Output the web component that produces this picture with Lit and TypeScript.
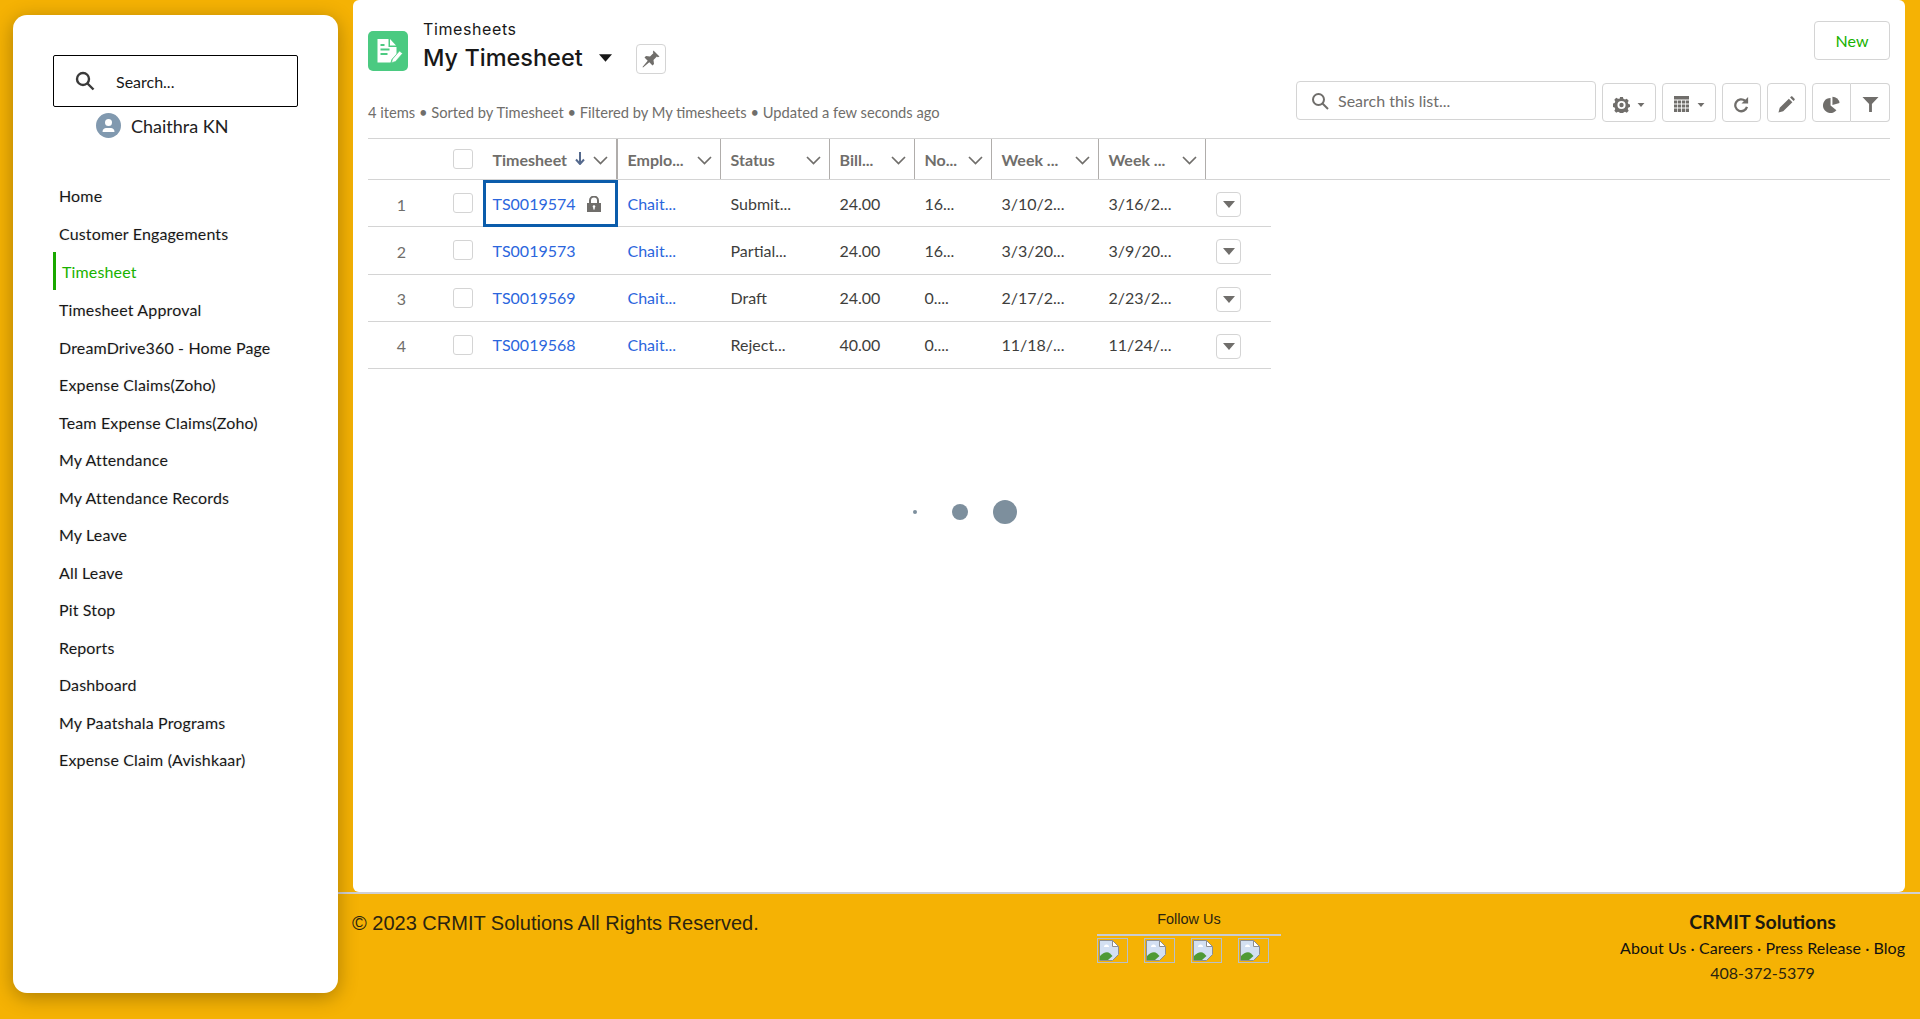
import { LitElement, css, html, svg } from 'lit'
import { customElement } from 'lit/decorators.js'

const NAV = [
  'Home', 'Customer Engagements', 'Timesheet', 'Timesheet Approval', 'DreamDrive360 - Home Page',
  'Expense Claims(Zoho)', 'Team Expense Claims(Zoho)', 'My Attendance', 'My Attendance Records',
  'My Leave', 'All Leave', 'Pit Stop', 'Reports', 'Dashboard', 'My Paatshala Programs', 'Expense Claim (Avishkaar)',
]

const COLS = [
  { label: 'Timesheet', w: 135, sorted: true },
  { label: 'Emplo...', w: 103 },
  { label: 'Status', w: 109 },
  { label: 'Bill...', w: 85 },
  { label: 'No...', w: 77 },
  { label: 'Week ...', w: 107 },
  { label: 'Week ...', w: 107 },
]

const ROWS = [
  ['TS0019574', 'Chait...', 'Submit...', '24.00', '16...', '3/10/2...', '3/16/2...'],
  ['TS0019573', 'Chait...', 'Partial...', '24.00', '16...', '3/3/20...', '3/9/20...'],
  ['TS0019569', 'Chait...', 'Draft', '24.00', '0....', '2/17/2...', '2/23/2...'],
  ['TS0019568', 'Chait...', 'Reject...', '40.00', '0....', '11/18/...', '11/24/...'],
]

const chevron = svg`<svg class="chev" viewBox="0 0 15 9"><path d="M1 1l6.500 6.500L14 1" fill="none" stroke="#706e6b" stroke-width="1.700"/></svg>`

const caret = (cls: string) => html`<svg class=${cls} viewBox="0 0 12 7"><path d="M0 0h12L6 7z" fill="currentColor"/></svg>`

// browser's missing image glyph, the links in the footer had no picture
const brokenImg = html`<span class="broken"><svg width="20" height="21" viewBox="0 0 20 21">
  <path d="M.5.500h13l6 6v8l-6 6H.5z" fill="#d3e0f2" stroke="#8e8e8e"/>
  <path d="M13.500.500v6h6z" fill="#fff" stroke="#8e8e8e"/>
  <path d="M5 7a2.500 2.500 0 0 1 5 0z" fill="#fff"/>
  <path d="M1 20v-4c3-3 7-5 10-2.500l2.500 2.500-4.500 4z" fill="#4f9a35"/>
</svg></span>`

@customElement('app-root')
export class AppRoot extends LitElement {
  static styles = css`
    :host {
      display: grid;
      grid-template-columns: 338px 1fr;
      grid-template-rows: 892px 127px;
      height: 1019px;
      background: #f5b204;
      font-family: Lato, sans-serif;
      color: #181818;
      overflow: hidden;
    }
    .side {
      grid-row: 1 / 3;
      z-index: 1;
      margin: 15px 0 26px 13px;
      background: #fff;
      border-radius: 14px;
      box-shadow: 0 4px 20px rgba(0,0,0,.3);
      padding: 40px 40px 0;
      display: flex;
      flex-direction: column;
    }
    .side-search {
      height: 52px;
      width: 245px;
      box-sizing: border-box;
      border: 1.5px solid #000;
      border-radius: 2px;
      display: flex;
      align-items: center;
      padding-left: 21px;
      gap: 21px;
      font-size: 16px;
      flex: none;
    }
    .side-search svg { width: 20px; height: 20px; }
    .user {
      display: flex;
      align-items: center;
      gap: 10px;
      margin: 6px 0 0 43px;
      font-size: 18px;
      color: #222;
    }
    .avatar { width: 25px; height: 25px; }
    .nav {
      list-style: none;
      margin: 39px 0 0;
      padding: 0;
      display: flex;
      flex-direction: column;
      font-size: 16px;
      letter-spacing: .15px;
    }
    .nav li {
      height: 37.5px;
      display: flex;
      align-items: center;
      padding-left: 6px;
      text-shadow: 0 0 2px rgba(0,0,0,.12);
    }
    .nav li.on {
      color: #19b200;
      border-left: 3px solid #19a800;
      padding-left: 6px;
      height: 38px;
      margin: 0 0 1px;
      text-shadow: none;
    }

    .main {
      z-index: 2;
      margin: 0 15px;
      background: #fff;
      border-radius: 6px;
      padding: 0 15px 0 15px;
      display: flex;
      flex-direction: column;
    }
    .top {
      display: flex;
      justify-content: space-between;
      padding-top: 21px;
      height: 60px;
      box-sizing: border-box;
    }
    .title { display: flex; }
    .app-icon { width: 40px; height: 40px; margin-top: 10px; flex: none; }
    .crumb-wrap { margin-left: 15px; font-family: Inter, sans-serif; }
    .crumb { font-size: 16px; letter-spacing: .6px; line-height: 17px; color: #181818; }
    .name-row { display: flex; align-items: center; margin-top: 4px; }
    .name { font-size: 23.5px; font-weight: 500; line-height: 30px; color: #181818; }
    .drop { width: 13px; height: 8px; margin-left: 16px; color: #181818; }
    .pin {
      width: 30px;
      height: 30px;
      margin-left: 24px;
      align-self: flex-start;
      margin-top: 2px;
    }
    .btn {
      box-sizing: border-box;
      border: 1px solid #d4d4d4;
      border-radius: 4px;
      background: #fff;
      display: flex;
      align-items: center;
      justify-content: center;
    }
    .new {
      width: 76px;
      height: 39px;
      color: #19b200;
      font-size: 16px;
    }
    .bar {
      display: flex;
      align-items: flex-end;
      justify-content: space-between;
      height: 62px;
      flex: none;
    }
    .meta { font-size: 14.7px; color: #706e6b; line-height: 17px; padding-bottom: 1px; }
    .tools { display: flex; align-items: flex-start; gap: 6px; }
    .list-search {
      width: 300px;
      height: 39px;
      box-sizing: border-box;
      border: 1px solid #d4d4d4;
      border-radius: 4px;
      display: flex;
      align-items: center;
      padding-left: 14px;
      gap: 9px;
      color: #706e6b;
      font-size: 16px;
    }
    .list-search svg { width: 18px; height: 18px; }
    .tool { height: 39px; margin-top: 2px; gap: 7px; color: #706e6b; padding-top: 4px; }
    .tool svg.ic { width: 17px; height: 17px; }
    .tool .tiny { width: 8px; height: 4px; }
    .w54 { width: 54px; }
    .w39 { width: 39px; }
    .group { display: flex; margin-top: 2px; height: 39px; }
    .group .tool { margin-top: 0; width: 39px; }
    .group .tool:first-child { border-radius: 4px 0 0 4px; }
    .group .tool:last-child { border-radius: 0 4px 4px 0; border-left: 0; }

    .head, .row { display: flex; flex: none; }
    .head {
      border-top: 1px solid #d4d4d4;
      border-bottom: 1px solid #d4d4d4;
      height: 42px;
      box-sizing: border-box;
      margin-top: 16px;
    }
    .row {
      width: 903px;
      height: 47.25px;
      box-sizing: border-box;
      border-bottom: 1px solid #d4d4d4;
      font-size: 16px;
      color: #3e3e3c;
    }
    .gutter { width: 85px; flex: none; }
    .num { width: 85px; flex: none; text-align: right; padding: 2px 47px 0 0; box-sizing: border-box; color: #706e6b; align-self: center; }
    .chk-cell { width: 30px; flex: none; display: flex; align-items: center; }
    .chk { width: 20px; height: 20px; box-sizing: border-box; border: 1px solid #d4d4d4; border-radius: 3px; background: #fff; }
    .th {
      box-sizing: border-box;
      flex: none;
      display: flex;
      align-items: center;
      padding-left: 9.5px;
      border-right: 1px solid #b0adab;
      font-size: 16px;
      font-weight: 700;
      color: #706e6b;
      position: relative;
    }
    .th.first { border-right-width: 2px; }
    .th .chev { width: 15px; height: 9px; position: absolute; right: 8px; top: 17px; }
    .arrow { width: 10px; height: 13px; margin-left: 8px; margin-top: -2px; }
    .td {
      box-sizing: border-box;
      flex: none;
      display: flex;
      align-items: center;
      padding-left: 9.5px;
    }
    .td a { color: #2b66dd; text-decoration: none; }
    .td.focus {
      border: 3px solid #0b5cab;
      padding-left: 6.5px;
      gap: 11px;
      height: 47px;
    }
    .lock { width: 14px; height: 16px; }
    .row-btn { width: 25px; height: 25px; color: #706e6b; margin: 3px 0 0 10px; align-self: center; flex: none; }
    .row-btn svg { width: 12px; height: 7px; }

    .spin {
      display: flex;
      align-items: center;
      margin: 131px 0 0 545px;
      height: 24px;
    }
    .spin i { display: block; border-radius: 50%; background: #7d8f9d; flex: none; }
    .spin .a { width: 4px; height: 4px; }
    .spin .b { width: 16px; height: 16px; margin-left: 35px; }
    .spin .c { width: 24px; height: 24px; margin-left: 25px; }

    .foot {
      border-top: 2px solid #d0d0d4;
      padding: 18px 15px 0 14px;
      display: flex;
      justify-content: space-between;
      align-items: flex-start;
    }
    .copy { font: 20px/23px "Liberation Sans", Arial, sans-serif; color: #2b2410; width: 745px; flex: none; }
    .follow { width: 184px; flex: none; font: 14.5px/16px "Liberation Sans", Arial, sans-serif; color: #2b2410; text-align: center; }
    .follow .lbl { padding-bottom: 7px; border-bottom: 2px solid #c8ccd4; margin-top: -1px; }
    .icons { display: flex; gap: 16px; margin-top: 2px; }
    .broken { box-sizing: border-box; width: 31px; height: 25px; border: 1px solid #b9c0c8; display: flex; padding: 1px 0 0 1px; overflow: hidden; }
    .info { text-align: center; color: #1d1a10; margin-left: auto; margin-top: -1px; }
    .info b { display: block; font-size: 19.5px; line-height: 22px; }
    .links { font-size: 16px; letter-spacing: .05px; line-height: 20px; margin-top: 5px; color: #111; }
    .tel { font-size: 16px; line-height: 20px; margin-top: 5px; color: #2b2410; }
  `

  render() {
    return html`
      <aside class="side">
        <div class="side-search">
          <svg viewBox="0 0 20 20"><circle cx="8" cy="8" r="6" fill="none" stroke="#3a3a3a" stroke-width="2.400"/><path d="m12.500 12.500 6 6" stroke="#3a3a3a" stroke-width="2.400"/></svg>
          <span>Search...</span>
        </div>
        <div class="user">
          <svg class="avatar" viewBox="0 0 25 25"><circle cx="12.500" cy="12.500" r="12.500" fill="#8199af"/><circle cx="12.500" cy="9.500" r="3.500" fill="#fff"/><path d="M6.500 19c0-3 2-4 3.500-4h5c1.500 0 3.500 1 3.500 4z" fill="#fff"/></svg>
          <span>Chaithra KN</span>
        </div>
        <ul class="nav">
          ${NAV.map(n => html`<li class=${n === 'Timesheet' ? 'on' : ''}>${n}</li>`)}
        </ul>
      </aside>

      <main class="main">
        <div class="top">
          <div class="title">
            <svg class="app-icon" viewBox="0 0 40 40">
              <rect width="40" height="40" rx="5" fill="#4bca81"/>
              <path d="M9.500 8h11v8h8v7l-5 5.500-1 3h-13z" fill="#fff"/>
              <path d="M22 8l6 6.500h-6z" fill="#fff"/>
              <path d="M12.500 14h4M12.500 18.500h9M12.500 23h7" stroke="#4bca81" stroke-width="1.800"/>
              <path d="m24.500 28 7-8 3 2.500-7 8-4 1.200z" fill="#fff" stroke="#4bca81" stroke-width=".6"/>
            </svg>
            <div class="crumb-wrap">
              <div class="crumb">Timesheets</div>
              <div class="name-row">
                <span class="name">My Timesheet</span>
                ${caret('drop')}
                <div class="btn pin">
                  <svg width="18" height="18" viewBox="0 0 18 18"><path d="M11.500.5l6 6-1.700.7-.9-.7-3.400 3.500.5 4-1.500 1.500-3.200-3.200L1 17.500.5 17l5.200-6.300-3.200-3.200L4 6l4 .5 3.500-3.400-.7-.9z" fill="#706e6b"/></svg>
                </div>
              </div>
            </div>
          </div>
          <div class="btn new">New</div>
        </div>

        <div class="bar">
          <div class="meta">4 items • Sorted by Timesheet • Filtered by My timesheets • Updated a few seconds ago</div>
          <div class="tools">
            <div class="list-search">
              <svg viewBox="0 0 18 18"><circle cx="7.500" cy="7.500" r="5.500" fill="none" stroke="#706e6b" stroke-width="2"/><path d="m11.500 11.500 5.500 5.500" stroke="#706e6b" stroke-width="2"/></svg>
              <span>Search this list...</span>
            </div>
            <div class="btn tool w54">
              <svg class="ic" viewBox="0 0 18 18"><path d="M7.500 1h3l.5 2 1.700.8 1.900-1 2 2.200-1 1.800.7 1.700 2 .5v2.500l-2 .6-.7 1.700 1 1.800-2 2.100-1.900-1-1.700.7-.5 2h-3l-.5-2-1.700-.7-1.900 1-2-2.100 1-1.800-.7-1.700-2-.6V8l2-.5.7-1.700-1-1.800 2-2.200 1.900 1L7 3z" fill="#706e6b"/><circle cx="9" cy="9.500" r="4.300" fill="#fff"/><circle cx="9" cy="9.500" r="2.300" fill="#706e6b"/></svg>
              ${caret('tiny')}
            </div>
            <div class="btn tool w54">
              <svg class="ic" viewBox="0 0 17 17"><path d="M1 0h15v3.500H1z" fill="#706e6b"/><path d="M1 4.500h3.200v3H1zM4.900 4.500h3.200v3H4.900zM8.900 4.500h3.200v3H8.900zM12.800 4.500H16v3h-3.200zM1 8.500h3.200v3H1zM4.900 8.500h3.200v3H4.900zM8.900 8.500h3.200v3H8.900zM12.800 8.500H16v3h-3.200zM1 12.500h3.200v3.500H1zM4.900 12.500h3.200v3.500H4.900zM8.900 12.500h3.200v3.500H8.900zM12.800 12.500H16v3.500h-3.200z" fill="#706e6b"/></svg>
              ${caret('tiny')}
            </div>
            <div class="btn tool w39">
              <svg class="ic" viewBox="0 0 18 18"><path d="M14.800 11.500A6.300 6.300 0 1 1 12.800 5" fill="none" stroke="#706e6b" stroke-width="2.400"/><path d="M16 1v7H9z" fill="#706e6b"/></svg>
            </div>
            <div class="btn tool w39">
              <svg class="ic" viewBox="0 0 18 18"><path d="m.5 17.500 1.300-5L11.500 2.800l3.700 3.700-9.700 9.700zM12.800 1.500l1-1c.4-.4 1-.4 1.400 0l2.300 2.300c.4.4.4 1 0 1.400l-1 1z" fill="#706e6b"/></svg>
            </div>
            <div class="group">
              <div class="btn tool">
                <svg class="ic" viewBox="0 0 18 18"><path d="M8 2v8l6.200 5A8 8 0 1 1 8 2z" fill="#706e6b"/><path d="M10 .8a7.500 7.500 0 0 1 7.500 6.700L10 9.500z" fill="#706e6b"/></svg>
              </div>
              <div class="btn tool">
                <svg class="ic" viewBox="0 0 18 18"><path d="M.5 1h17l-7 7.500V17h-3V8.500z" fill="#706e6b"/></svg>
              </div>
            </div>
          </div>
        </div>

        <div class="head">
          <div class="gutter"></div>
          <div class="chk-cell"><div class="chk"></div></div>
          ${COLS.map((c, i) => html`<div class="th ${i === 0 ? 'first' : ''}" style="width:${c.w}px">
            ${c.label}
            ${c.sorted ? html`<svg class="arrow" viewBox="0 0 10 13"><path d="M5 0v11.500M1 7.500l4 4.500 4-4.500" fill="none" stroke="#54698d" stroke-width="2"/></svg>` : ''}
            ${chevron}
          </div>`)}
        </div>

        ${ROWS.map((r, ri) => html`<div class="row">
          <div class="num">${ri + 1}</div>
          <div class="chk-cell"><div class="chk"></div></div>
          ${r.map((v, i) => html`<div class="td ${i === 0 && ri === 0 ? 'focus' : ''}" style="width:${COLS[i].w}px">
            ${i < 2 ? html`<a>${v}</a>` : v}
            ${i === 0 && ri === 0 ? html`<svg class="lock" viewBox="0 0 14 16"><path d="M3 7V4.500a4 4 0 0 1 8 0V7" fill="none" stroke="#706e6b" stroke-width="2"/><path d="M0 7h14v9H0z" fill="#706e6b"/><circle cx="7" cy="10.500" r="1.300" fill="#fff"/><path d="M6.300 11h1.400v2.500H6.300z" fill="#fff"/></svg>` : ''}
          </div>`)}
          <div class="btn row-btn">${caret('')}</div>
        </div>`)}

        <div class="spin"><i class="a"></i><i class="b"></i><i class="c"></i></div>
      </main>

      <footer class="foot">
        <div class="copy">© 2023 CRMIT Solutions All Rights Reserved.</div>
        <div class="follow">
          <div class="lbl">Follow Us</div>
          <div class="icons">${brokenImg}${brokenImg}${brokenImg}${brokenImg}</div>
        </div>
        <div class="info">
          <b>CRMIT Solutions</b>
          <div class="links">About Us · Careers · Press Release · Blog</div>
          <div class="tel">408-372-5379</div>
        </div>
      </footer>
    `
  }
}
